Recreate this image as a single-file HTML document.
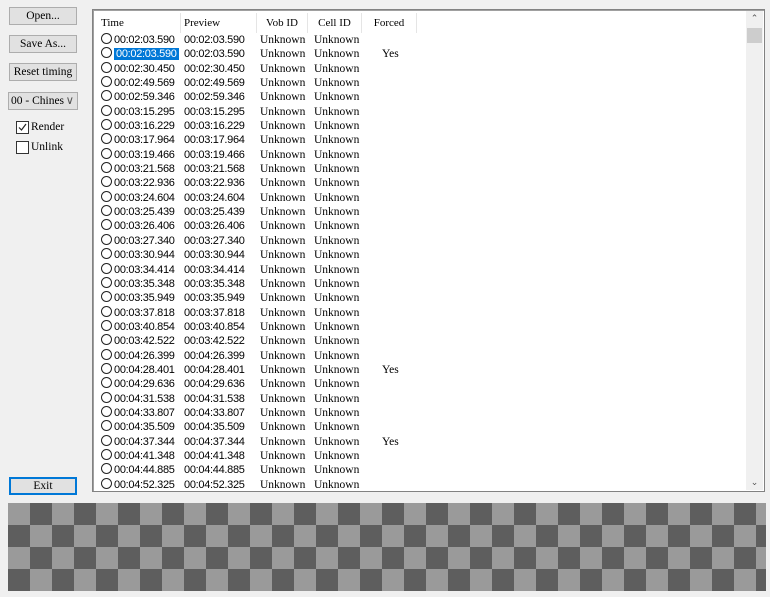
<!DOCTYPE html>
<html><head><meta charset="utf-8"><style>
body{margin:0;width:770px;height:597px;background:#f0f0f0;position:relative;overflow:hidden;font-family:"Liberation Serif",serif;font-size:12px;color:#000}
.btn{position:absolute;left:9px;width:66px;height:16px;border:1px solid #adadad;background:#e1e1e1;text-align:center;line-height:16px;font-size:11.5px}
.lb{position:absolute;left:92px;top:9px;width:671px;height:481px;border:1px solid #828282;background:#fff;box-shadow:inset 1px 1px 0 #a0a0a0}
.hdr{position:absolute;top:3px;height:20px;line-height:20px;font-size:11px;border-right:1px solid #e5e5e5}
.rows{position:absolute;left:5px;top:23px}
.r{height:14.35px;line-height:14.35px;position:relative;white-space:nowrap;font-size:11.5px}
.r span{position:absolute;top:0}
.t{left:3px;font-family:"Liberation Sans",sans-serif;font-size:11px;letter-spacing:-0.3px}
.t:before{content:"";display:inline-block;width:9px;height:9px;border:1px solid #222;border-radius:50%;margin-right:2px;vertical-align:-1px}
.p{left:86px;font-family:"Liberation Sans",sans-serif;font-size:11px;letter-spacing:-0.3px}
.v{left:162px}.c{left:216px}.f{left:284px}
.sel{background:#0078d7;color:#fff;padding:0 2px}
.chk{position:absolute;left:16px;width:11px;height:11px;border:1px solid #333;background:#fff}
.cb{position:absolute;left:8px;top:503px;width:758px;height:88px;background:conic-gradient(#5e5e5e 25%,#9a9a9a 0 50%,#5e5e5e 0 75%,#9a9a9a 0);background-size:44px 44px}
</style></head><body>
<div class="btn" style="top:7px">Open...</div>
<div class="btn" style="top:35px">Save As...</div>
<div class="btn" style="top:63px">Reset timing</div>
<div class="btn" style="top:92px;left:8px;text-align:left;padding-left:2px;width:66px">00 - Chines <span style="position:absolute;right:3px;color:#555">&#8744;</span></div>
<div class="chk" style="top:121px"><svg width="11" height="11"><path d="M2 5.5L4.5 8L9 2" stroke="#222" fill="none" stroke-width="1.2"/></svg></div>
<div style="position:absolute;left:31px;top:121px;font-size:11.5px">Render</div>
<div class="chk" style="top:141px"></div>
<div style="position:absolute;left:31px;top:141px;font-size:11.5px">Unlink</div>
<div class="btn" style="top:477px;border:1px solid #0078d7;box-shadow:inset 0 0 0 1px #0078d7">Exit</div>
<div class="lb">
<div class="hdr" style="left:6px;width:79px;padding-left:2px">Time</div>
<div class="hdr" style="left:87px;width:72px;padding-left:4px">Preview</div>
<div class="hdr" style="left:164px;width:50px;text-align:center">Vob ID</div>
<div class="hdr" style="left:215px;width:53px;text-align:center">Cell ID</div>
<div class="hdr" style="left:269px;width:54px;text-align:center">Forced</div>
<div style="position:absolute;right:1px;top:1px;width:17px;height:479px;background:#f0f0f0"><div style="position:absolute;top:2px;width:17px;text-align:center;font-size:9px;color:#555">&#8963;</div><div style="position:absolute;top:17px;left:1px;width:15px;height:15px;background:#cdcdcd"></div><div style="position:absolute;bottom:2px;width:17px;text-align:center;font-size:9px;color:#555">&#8964;</div></div>
<div class="rows">
<div class="r"><span class="t">00:02:03.590</span><span class="p">00:02:03.590</span><span class="v">Unknown</span><span class="c">Unknown</span></div>
<div class="r"><span class="t"><b class="sel" style="font-weight:normal">00:02:03.590</b></span><span class="p">00:02:03.590</span><span class="v">Unknown</span><span class="c">Unknown</span><span class="f">Yes</span></div>
<div class="r"><span class="t">00:02:30.450</span><span class="p">00:02:30.450</span><span class="v">Unknown</span><span class="c">Unknown</span></div>
<div class="r"><span class="t">00:02:49.569</span><span class="p">00:02:49.569</span><span class="v">Unknown</span><span class="c">Unknown</span></div>
<div class="r"><span class="t">00:02:59.346</span><span class="p">00:02:59.346</span><span class="v">Unknown</span><span class="c">Unknown</span></div>
<div class="r"><span class="t">00:03:15.295</span><span class="p">00:03:15.295</span><span class="v">Unknown</span><span class="c">Unknown</span></div>
<div class="r"><span class="t">00:03:16.229</span><span class="p">00:03:16.229</span><span class="v">Unknown</span><span class="c">Unknown</span></div>
<div class="r"><span class="t">00:03:17.964</span><span class="p">00:03:17.964</span><span class="v">Unknown</span><span class="c">Unknown</span></div>
<div class="r"><span class="t">00:03:19.466</span><span class="p">00:03:19.466</span><span class="v">Unknown</span><span class="c">Unknown</span></div>
<div class="r"><span class="t">00:03:21.568</span><span class="p">00:03:21.568</span><span class="v">Unknown</span><span class="c">Unknown</span></div>
<div class="r"><span class="t">00:03:22.936</span><span class="p">00:03:22.936</span><span class="v">Unknown</span><span class="c">Unknown</span></div>
<div class="r"><span class="t">00:03:24.604</span><span class="p">00:03:24.604</span><span class="v">Unknown</span><span class="c">Unknown</span></div>
<div class="r"><span class="t">00:03:25.439</span><span class="p">00:03:25.439</span><span class="v">Unknown</span><span class="c">Unknown</span></div>
<div class="r"><span class="t">00:03:26.406</span><span class="p">00:03:26.406</span><span class="v">Unknown</span><span class="c">Unknown</span></div>
<div class="r"><span class="t">00:03:27.340</span><span class="p">00:03:27.340</span><span class="v">Unknown</span><span class="c">Unknown</span></div>
<div class="r"><span class="t">00:03:30.944</span><span class="p">00:03:30.944</span><span class="v">Unknown</span><span class="c">Unknown</span></div>
<div class="r"><span class="t">00:03:34.414</span><span class="p">00:03:34.414</span><span class="v">Unknown</span><span class="c">Unknown</span></div>
<div class="r"><span class="t">00:03:35.348</span><span class="p">00:03:35.348</span><span class="v">Unknown</span><span class="c">Unknown</span></div>
<div class="r"><span class="t">00:03:35.949</span><span class="p">00:03:35.949</span><span class="v">Unknown</span><span class="c">Unknown</span></div>
<div class="r"><span class="t">00:03:37.818</span><span class="p">00:03:37.818</span><span class="v">Unknown</span><span class="c">Unknown</span></div>
<div class="r"><span class="t">00:03:40.854</span><span class="p">00:03:40.854</span><span class="v">Unknown</span><span class="c">Unknown</span></div>
<div class="r"><span class="t">00:03:42.522</span><span class="p">00:03:42.522</span><span class="v">Unknown</span><span class="c">Unknown</span></div>
<div class="r"><span class="t">00:04:26.399</span><span class="p">00:04:26.399</span><span class="v">Unknown</span><span class="c">Unknown</span></div>
<div class="r"><span class="t">00:04:28.401</span><span class="p">00:04:28.401</span><span class="v">Unknown</span><span class="c">Unknown</span><span class="f">Yes</span></div>
<div class="r"><span class="t">00:04:29.636</span><span class="p">00:04:29.636</span><span class="v">Unknown</span><span class="c">Unknown</span></div>
<div class="r"><span class="t">00:04:31.538</span><span class="p">00:04:31.538</span><span class="v">Unknown</span><span class="c">Unknown</span></div>
<div class="r"><span class="t">00:04:33.807</span><span class="p">00:04:33.807</span><span class="v">Unknown</span><span class="c">Unknown</span></div>
<div class="r"><span class="t">00:04:35.509</span><span class="p">00:04:35.509</span><span class="v">Unknown</span><span class="c">Unknown</span></div>
<div class="r"><span class="t">00:04:37.344</span><span class="p">00:04:37.344</span><span class="v">Unknown</span><span class="c">Unknown</span><span class="f">Yes</span></div>
<div class="r"><span class="t">00:04:41.348</span><span class="p">00:04:41.348</span><span class="v">Unknown</span><span class="c">Unknown</span></div>
<div class="r"><span class="t">00:04:44.885</span><span class="p">00:04:44.885</span><span class="v">Unknown</span><span class="c">Unknown</span></div>
<div class="r"><span class="t">00:04:52.325</span><span class="p">00:04:52.325</span><span class="v">Unknown</span><span class="c">Unknown</span></div>
</div>
</div>
<div class="cb"></div>
</body></html>
